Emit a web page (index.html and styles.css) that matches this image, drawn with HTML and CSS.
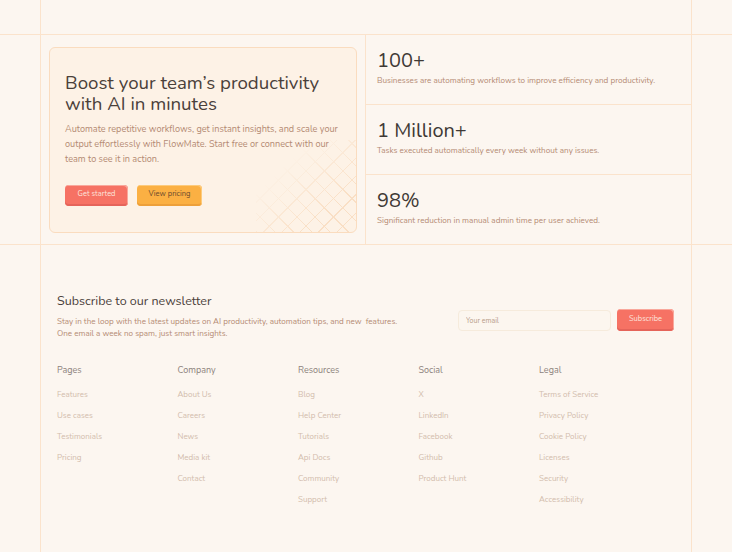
FILE: index.html
```html
<!DOCTYPE html>
<html lang="en">
<head>
<meta charset="utf-8">
<title>FlowMate</title>
<link rel="stylesheet" href="styles.css">
</head>
<body>
<div class="band band-top"><div class="frame frame-top"></div></div>

<section class="band band-hero">
  <div class="frame hero">
    <div class="hero-left">
      <div class="card">
        <h1 class="card-title">Boost your team’s productivity with AI in minutes</h1>
        <p class="card-text">Automate repetitive workflows, get instant insights, and scale your output effortlessly with FlowMate. Start free or connect with our team to see it in action.</p>
        <div class="card-actions">
          <a class="btn btn-red" href="#">Get started</a>
          <a class="btn btn-orange" href="#">View pricing</a>
        </div>
        <div class="card-pattern"></div>
      </div>
    </div>
    <div class="stats">
      <div class="stat">
        <div class="stat-num">100+</div>
        <div class="stat-desc">Businesses are automating workflows to improve efficiency and productivity.</div>
      </div>
      <div class="stat">
        <div class="stat-num">1 Million+</div>
        <div class="stat-desc">Tasks executed automatically every week without any issues.</div>
      </div>
      <div class="stat">
        <div class="stat-num">98%</div>
        <div class="stat-desc">Significant reduction in manual admin time per user achieved.</div>
      </div>
    </div>
  </div>
</section>

<footer class="band band-footer">
  <div class="frame footer">
    <div class="newsletter">
      <div class="nl-text">
        <h2 class="nl-title">Subscribe to our newsletter</h2>
        <p class="nl-desc">Stay in the loop with the latest updates on AI productivity, automation tips, and new&nbsp; features.<br>One email a week no spam, just smart insights.</p>
      </div>
      <form class="nl-form">
        <input class="nl-input" type="email" placeholder="Your email">
        <button class="btn btn-red nl-btn" type="button">Subscribe</button>
      </form>
    </div>
    <div class="cols">
      <div class="col">
        <h3 class="col-title">Pages</h3>
        <a href="#">Features</a><a href="#">Use cases</a><a href="#">Testimonials</a><a href="#">Pricing</a>
      </div>
      <div class="col">
        <h3 class="col-title">Company</h3>
        <a href="#">About Us</a><a href="#">Careers</a><a href="#">News</a><a href="#">Media kit</a><a href="#">Contact</a>
      </div>
      <div class="col">
        <h3 class="col-title">Resources</h3>
        <a href="#">Blog</a><a href="#">Help Center</a><a href="#">Tutorials</a><a href="#">Api Docs</a><a href="#">Community</a><a href="#">Support</a>
      </div>
      <div class="col">
        <h3 class="col-title">Social</h3>
        <a href="#">X</a><a href="#">LinkedIn</a><a href="#">Facebook</a><a href="#">Github</a><a href="#">Product Hunt</a>
      </div>
      <div class="col">
        <h3 class="col-title">Legal</h3>
        <a href="#">Terms of Service</a><a href="#">Privacy Policy</a><a href="#">Cookie Policy</a><a href="#">Licenses</a><a href="#">Security</a><a href="#">Accessibility</a>
      </div>
    </div>
  </div>
</footer>
</body>
</html>
```

FILE: styles.css
```css
* { box-sizing: border-box; }
html, body { margin: 0; padding: 0; }
body {
  background: #fcf6f0;
  font-family: "Nunito", "Open Sans", "Noto Sans", sans-serif;
  color: #4a403a;
  width: 732px;
  height: 552px;
  overflow: hidden;
}
a { text-decoration: none; color: inherit; }
h1, h2, h3, p { margin: 0; font-weight: 400; }

.band { width: 100%; }
.band-top { border-bottom: 1px solid #fbe3cc; }
.band-hero { border-bottom: 1px solid #fbe3cc; }

.frame {
  margin-left: 40px;
  width: 652px;
  border-left: 1px solid #fbe3cc;
  border-right: 1px solid #fbe3cc;
}
.frame-top { height: 34px; }

.hero { display: flex; height: 209px; }
.hero-left {
  width: 325px;
  padding: 12px 8px 11px 8px;
  border-right: 1px solid #fbe3cc;
}
.card {
  position: relative;
  height: 100%;
  background: #fdf2e6;
  border: 1px solid #fadcbf;
  border-radius: 6px;
  padding: 25px 15px 0 15px;
  overflow: hidden;
}
.card-title {
  font-size: 18.7px;
  line-height: 21px;
  color: #4a403a;
}
.card-text {
  margin-top: 7px;
  font-size: 9.15px;
  line-height: 15px;
  color: #b48a73;
}
.card-actions { display: flex; gap: 9px; margin-top: 18px; position: relative; z-index: 1; }
.btn {
  display: inline-flex;
  align-items: flex-start;
  justify-content: center;
  height: 21px;
  padding-top: 4px;
  border-radius: 4px;
  font-family: inherit;
  font-size: 7.5px;
  line-height: 10px;
  border: 0;
}
.btn-red {
  width: 63px;
  background: #f67264;
  color: #fde4dc;
  box-shadow: inset -1px 1px 0 #f9a89c, inset 0 -2px 0 #e5645a;
}
.btn-orange {
  width: 65px;
  background: #fbb043;
  color: #6b4a2c;
  box-shadow: inset -1px 1px 0 #fdcb7c, inset 0 -2px 0 #eda03a;
}
.card-pattern {
  position: absolute;
  right: 0;
  bottom: 0;
  width: 100px;
  height: 92px;
  background:
    repeating-linear-gradient(45deg, #f9dfc5 0 1px, transparent 1px 13px),
    repeating-linear-gradient(-45deg, #f9dfc5 0 1px, transparent 1px 13px);
  -webkit-mask-image: linear-gradient(to top left, #000 25%, transparent 72%);
  mask-image: linear-gradient(to top left, #000 25%, transparent 72%);
}

.stats { flex: 1; display: flex; flex-direction: column; }
.stat {
  flex: 1;
  padding: 14px 11px 0 11px;
  border-bottom: 1px solid #fbe3cc;
}
.stat:last-child { border-bottom: 0; }
.stat-num {
  font-size: 20px;
  line-height: 24px;
  color: #3f3935;
}
.stat-desc {
  margin-top: 2px;
  font-size: 8.15px;
  line-height: 11px;
  color: #b48a73;
}

.footer { height: 307px; padding: 48px 17px 0 16px; }
.newsletter { display: flex; justify-content: space-between; align-items: flex-start; }
.nl-title { font-size: 12.5px; line-height: 16px; color: #4a403a; }
.nl-desc { margin-top: 7px; font-size: 8.1px; line-height: 12px; color: #b48a73; }
.nl-form { display: flex; gap: 6px; margin: 16px 0 0 0; }
.nl-input {
  width: 153px;
  height: 21px;
  border: 1px solid #f6ebdc;
  background: #fcf6ef;
  border-radius: 4px;
  padding: 0 7px;
  font-family: inherit;
  font-size: 7px;
  color: #4a403a;
  outline: none;
  margin-top: 1px;
}
.nl-input::placeholder { color: #b79b87; }
.nl-btn { width: 57px; height: 22px; padding-top: 5px; }

.cols {
  display: grid;
  grid-template-columns: repeat(5, 120.5px);
  margin-top: 24px;
}
.col { display: flex; flex-direction: column; }
.col-title {
  font-size: 9px;
  line-height: 12px;
  color: #8c827c;
  margin-bottom: 8px;
}
.col a {
  font-size: 8px;
  line-height: 21px;
  color: #d2bcac;
}
```
